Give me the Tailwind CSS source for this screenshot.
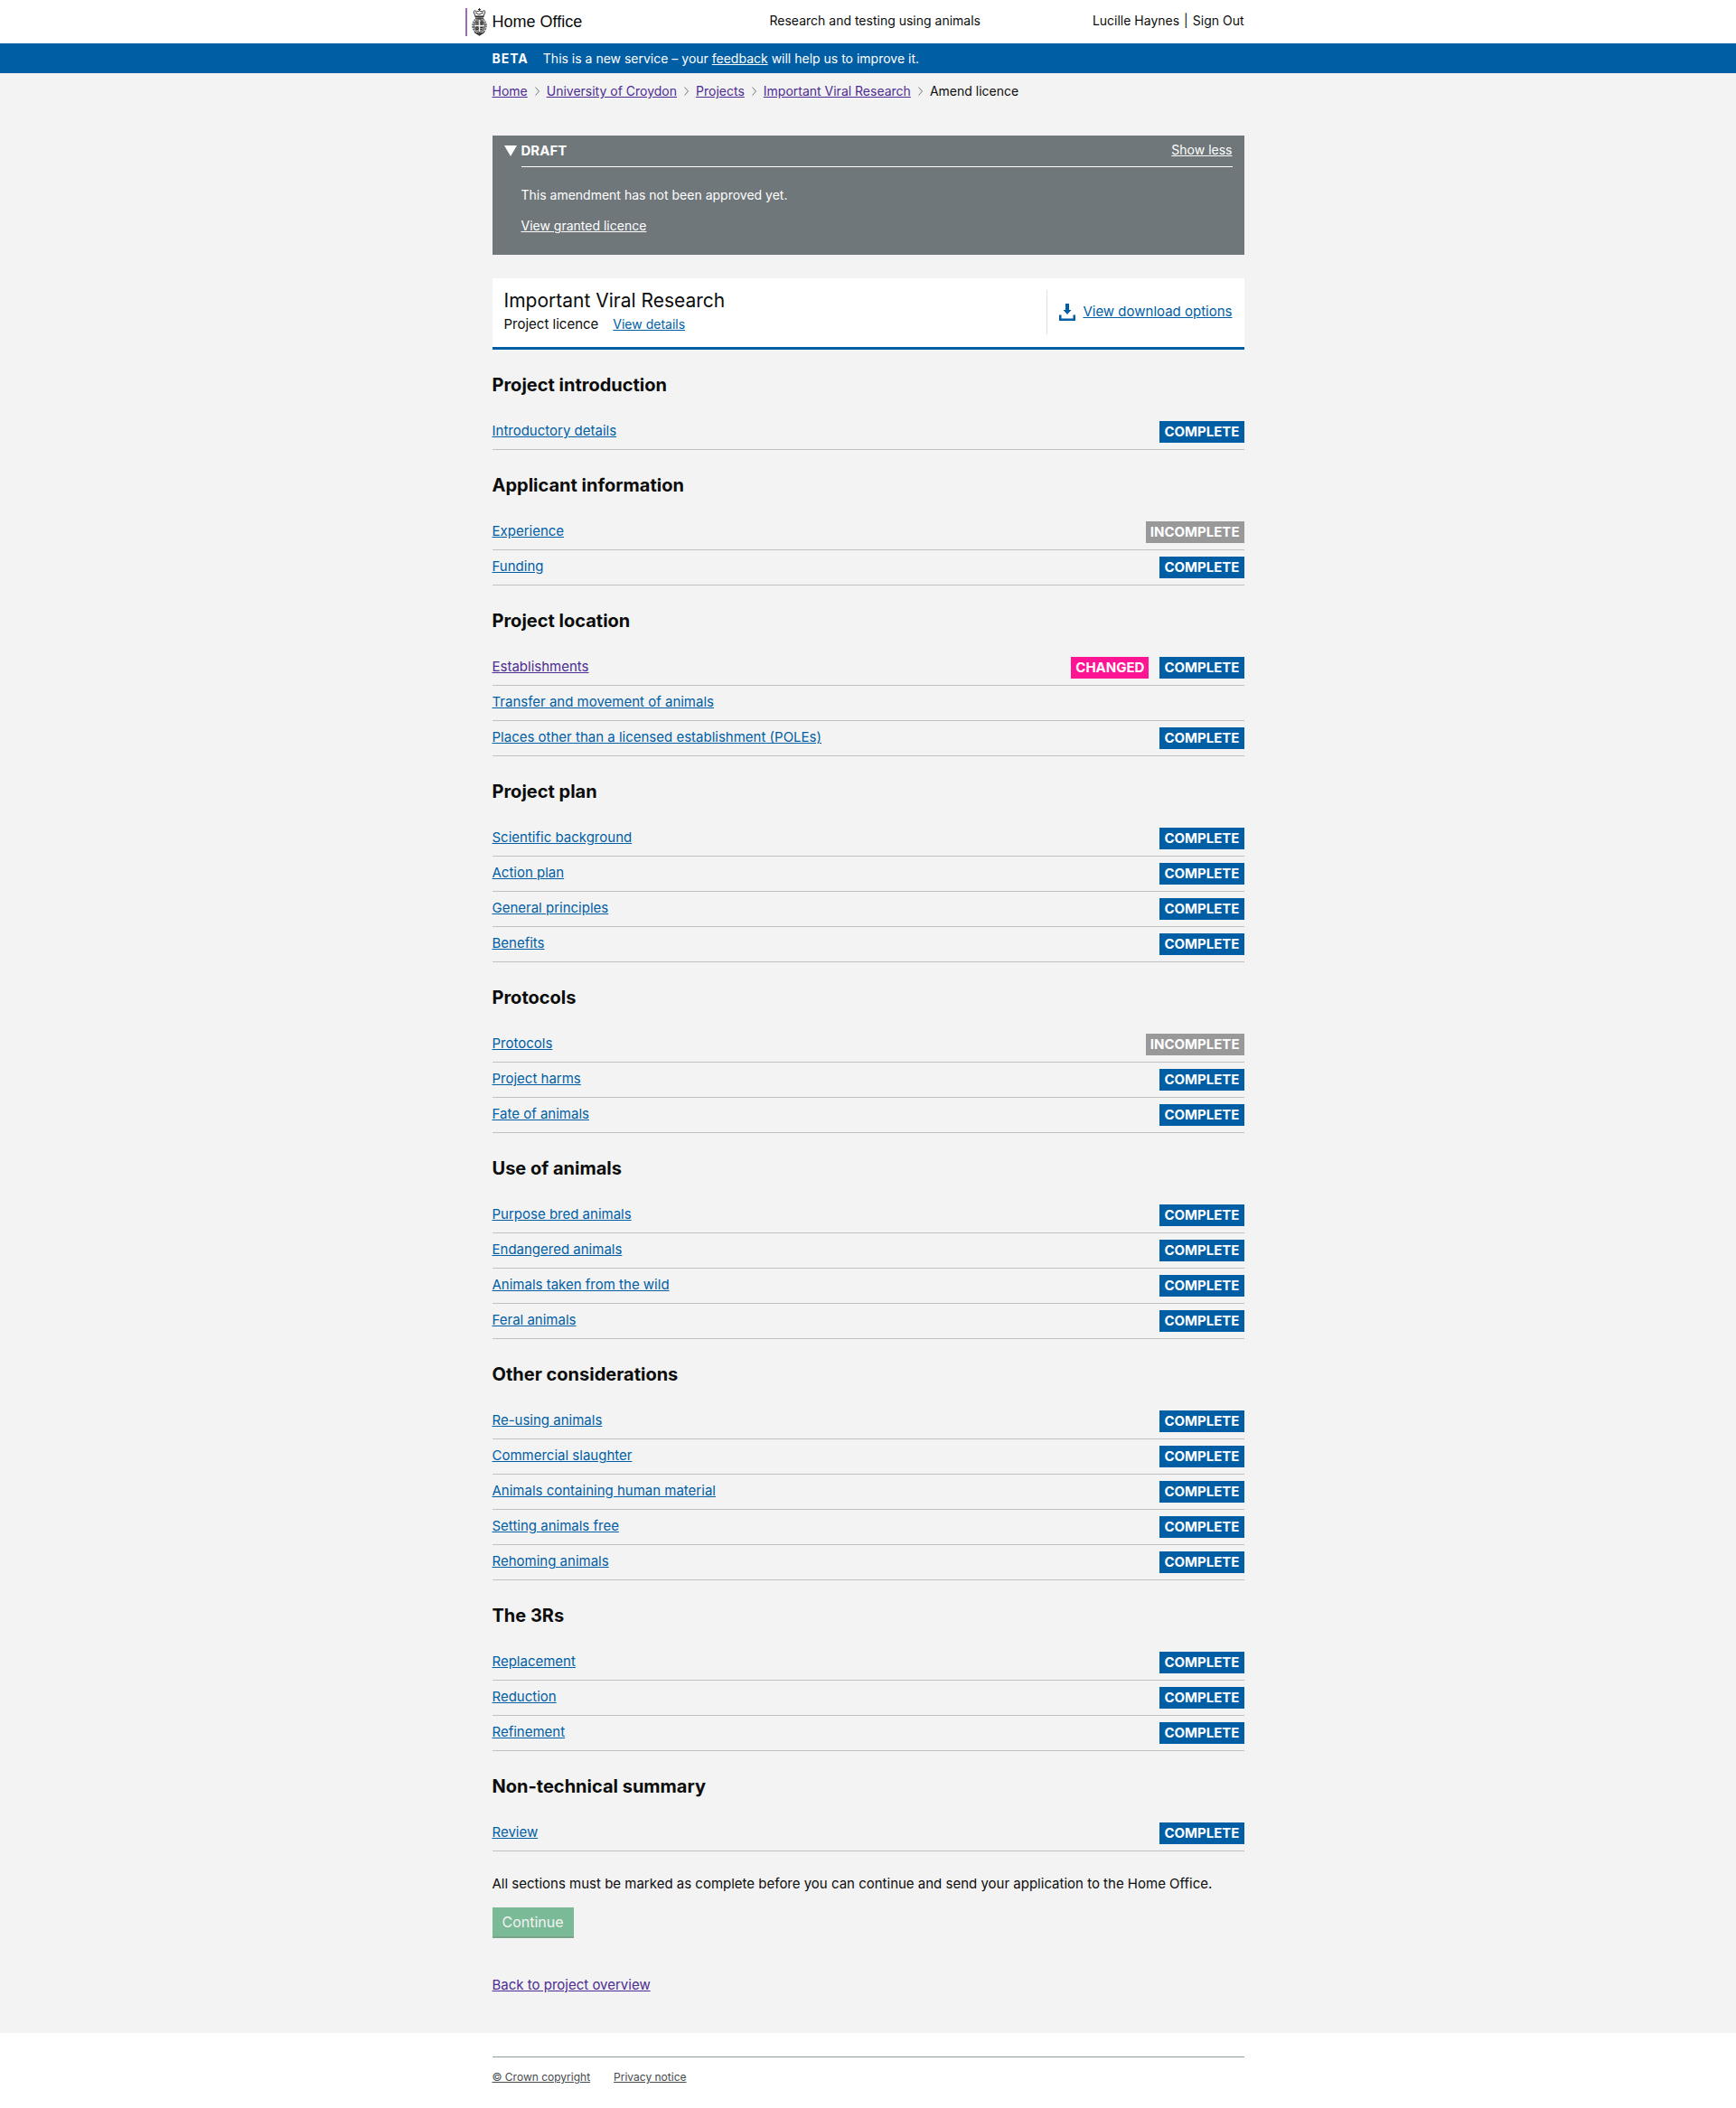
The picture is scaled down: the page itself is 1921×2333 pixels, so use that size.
<!DOCTYPE html>
<html lang="en">
<head>
<meta charset="utf-8">
<title>Amend licence - Research and testing using animals</title>
<meta name="viewport" content="width=device-width, initial-scale=1">
<script src="https://cdn.jsdelivr.net/npm/@tailwindcss/browser@4"></script>
</head>
<body class="bg-white font-['Inter',sans-serif] text-[15px]/6 text-[#0b0c0c]">

<header class="bg-white">
  <div class="mx-auto flex h-12 max-w-[832px] items-center text-sm">
    <div class="w-[307px]">
      <a href="#" class="-ml-[30px] flex items-center border-l-2 border-[#9b6bb8] font-['Liberation_Sans',sans-serif] text-lg/[31px]">
        <svg class="mr-1.5 ml-[5px] h-[31px] w-[17px]" viewBox="0 0 17 31" fill="none" stroke="#333" aria-hidden="true">
          <path d="M8.500 0v3M7 1.500h3" stroke-width="1"/>
          <path d="M2 3.500q2-1.500 3 0M12 3.500q2-1.500 3 0M2 4l2 5h9l2-5M4 5l4 2 5-2M5 4l3.500-1L12 4" stroke-width="1"/>
          <path d="M3.500 9.500h10M4 11.500h9" stroke-width="1.500"/>
          <ellipse cx="8.500" cy="19.500" rx="7.500" ry="8.500" stroke="#555" stroke-width="1.500" stroke-dasharray="2 .8"/>
          <ellipse cx="8.500" cy="19.500" rx="6" ry="7" fill="#999" stroke="#333" stroke-width=".8"/>
          <path d="M4.500 15.500h3M4.500 17.500h3M9.500 21.500h3M9.500 23.500h2" stroke="#222" stroke-width="1.200"/>
          <path d="M10 15h2v3h-2zM5 21h2v2.500H5z" stroke="#222" stroke-width="1"/>
          <path d="M8.500 13v13M3 19.500h11" stroke="#eee" stroke-width="1"/>
          <path d="M3 26.500l5.500 3.500 5.500-3.500M6 28h5" stroke-width="1.300"/>
        </svg>
        <span>Home Office</span>
      </a>
    </div>
    <a href="#" class="pb-0.5">Research and testing using animals</a>
    <nav class="ml-auto flex gap-[5px] pb-0.5" aria-label="Account"><a href="#">Lucille Haynes</a><span>|</span><a href="#">Sign Out</a></nav>
  </div>
</header>

<div class="bg-[#005ea5] text-white">
  <p class="mx-auto flex h-[33px] max-w-[832px] items-center gap-4 text-sm">
    <strong class="font-bold tracking-[1px]">BETA</strong>
    <span>This is a new service – your <a href="#" class="underline">feedback</a> will help us to improve it.</span>
  </p>
</div>

<div class="bg-[#f3f3f3]">
<div class="mx-auto max-w-[832px] pb-[41px]">

  <nav aria-label="Breadcrumb">
    <ol class="flex h-10 items-center gap-2 text-sm [&_a]:text-[#4c2c92] [&_a]:underline [&_svg]:mr-2 [&_li]:flex [&_li]:items-center">
      <li><a href="#">Home</a></li>
      <li><svg width="5" height="10" viewBox="0 0 5 10" fill="none" stroke="#6f777b" aria-hidden="true"><path d="M.5.500 4.500 5 .5 9.500"/></svg><a href="#">University of Croydon</a></li>
      <li><svg width="5" height="10" viewBox="0 0 5 10" fill="none" stroke="#6f777b" aria-hidden="true"><path d="M.5.500 4.500 5 .5 9.500"/></svg><a href="#">Projects</a></li>
      <li><svg width="5" height="10" viewBox="0 0 5 10" fill="none" stroke="#6f777b" aria-hidden="true"><path d="M.5.500 4.500 5 .5 9.500"/></svg><a href="#">Important Viral Research</a></li>
      <li aria-current="page"><svg width="5" height="10" viewBox="0 0 5 10" fill="none" stroke="#6f777b" aria-hidden="true"><path d="M.5.500 4.500 5 .5 9.500"/></svg>Amend licence</li>
    </ol>
  </nav>

  <section class="mt-[29px] bg-[#6f777b] px-[13px] pb-[22px] text-sm text-white">
    <div class="relative ml-[19px] flex h-[35px] items-center justify-between border-b border-white">
      <svg class="absolute top-[11px] -left-[19px]" width="14" height="12" viewBox="0 0 14 12" fill="#fff" aria-hidden="true"><path d="M0 0h14L7 12z"/></svg>
      <h2 class="text-[15px] font-bold">DRAFT</h2>
      <button type="button" class="pb-0.5 underline">Show less</button>
    </div>
    <div class="mt-[21px] ml-[19px] flex flex-col gap-3.5">
      <p>This amendment has not been approved yet.</p>
      <p><a href="#" class="underline">View granted licence</a></p>
    </div>
  </section>

  <section class="mt-[26px] flex justify-between border-b-3 border-[#005ea5] bg-white p-[13px]">
    <div>
      <h1 class="text-[21px]/6">Important Viral Research</h1>
      <p class="mt-0.5 flex items-baseline gap-4">Project licence <a href="#" class="text-sm/6 text-[#005ea5] underline">View details</a></p>
    </div>
    <a href="#" class="flex h-[49px] items-center gap-2 border-l border-[#dee0e2] pl-[13px] text-[#005ea5]">
      <svg width="18" height="19" viewBox="0 0 18 19" fill="#005ea5" aria-hidden="true"><path d="M7 0h4v7h2.500L9 12 4.500 7H7zM0 12.500h2.500v4h13v-4H18V19H0z"/></svg>
      <span class="pb-0.5 underline">View download options</span>
    </a>
  </section>

  <main class="[&_h2]:flex [&_h2]:h-[72px] [&_h2]:items-center [&_h2]:pt-1.5 [&_h2]:text-xl [&_h2]:font-bold [&_li]:flex [&_li]:h-[39px] [&_li]:items-center [&_li]:gap-3 [&_li]:border-b [&_li]:border-[#bfc1c3] [&_li>a]:mr-auto [&_li>a]:pb-0.5 [&_li>a]:text-[#005ea5] [&_li>a]:underline [&_b]:bg-[#005ea5] [&_b]:px-[5px] [&_b]:font-bold [&_b]:text-white">
    <h2>Project introduction</h2>
    <ul>
      <li><a href="#">Introductory details</a><b>COMPLETE</b></li>
    </ul>
    <h2>Applicant information</h2>
    <ul>
      <li><a href="#">Experience</a><b class="bg-[#999]!">INCOMPLETE</b></li>
      <li><a href="#">Funding</a><b>COMPLETE</b></li>
    </ul>
    <h2>Project location</h2>
    <ul>
      <li><a href="#" class="text-[#4c2c92]!">Establishments</a><b class="bg-[#ff1493]!">CHANGED</b><b>COMPLETE</b></li>
      <li><a href="#">Transfer and movement of animals</a></li>
      <li><a href="#">Places other than a licensed establishment (POLEs)</a><b>COMPLETE</b></li>
    </ul>
    <h2>Project plan</h2>
    <ul>
      <li><a href="#">Scientific background</a><b>COMPLETE</b></li>
      <li><a href="#">Action plan</a><b>COMPLETE</b></li>
      <li><a href="#">General principles</a><b>COMPLETE</b></li>
      <li><a href="#">Benefits</a><b>COMPLETE</b></li>
    </ul>
    <h2>Protocols</h2>
    <ul>
      <li><a href="#">Protocols</a><b class="bg-[#999]!">INCOMPLETE</b></li>
      <li><a href="#">Project harms</a><b>COMPLETE</b></li>
      <li><a href="#">Fate of animals</a><b>COMPLETE</b></li>
    </ul>
    <h2>Use of animals</h2>
    <ul>
      <li><a href="#">Purpose bred animals</a><b>COMPLETE</b></li>
      <li><a href="#">Endangered animals</a><b>COMPLETE</b></li>
      <li><a href="#">Animals taken from the wild</a><b>COMPLETE</b></li>
      <li><a href="#">Feral animals</a><b>COMPLETE</b></li>
    </ul>
    <h2>Other considerations</h2>
    <ul>
      <li><a href="#">Re-using animals</a><b>COMPLETE</b></li>
      <li><a href="#">Commercial slaughter</a><b>COMPLETE</b></li>
      <li><a href="#">Animals containing human material</a><b>COMPLETE</b></li>
      <li><a href="#">Setting animals free</a><b>COMPLETE</b></li>
      <li><a href="#">Rehoming animals</a><b>COMPLETE</b></li>
    </ul>
    <h2>The 3Rs</h2>
    <ul>
      <li><a href="#">Replacement</a><b>COMPLETE</b></li>
      <li><a href="#">Reduction</a><b>COMPLETE</b></li>
      <li><a href="#">Refinement</a><b>COMPLETE</b></li>
    </ul>
    <h2>Non-technical summary</h2>
    <ul>
      <li><a href="#">Review</a><b>COMPLETE</b></li>
    </ul>
    <p class="mt-6">All sections must be marked as complete before you can continue and send your application to the Home Office.</p>
    <button type="button" disabled class="mt-3.5 block border-b-2 border-[#7aa38c] bg-[#7bba97] px-[11px] text-base/8 text-[#f3f3f3]">Continue</button>
    <p class="mt-10"><a href="#" class="text-[#4c2c92] underline">Back to project overview</a></p>
  </main>
</div>
</div>

<footer class="mx-auto max-w-[832px] pt-[26px]">
  <div class="flex gap-[26px] border-t border-[#8f999e] pt-3.5 pb-[26px] text-xs text-[#454a4d]">
    <a href="#" class="underline">© Crown copyright</a>
    <a href="#" class="underline">Privacy notice</a>
  </div>
</footer>
</body>
</html>
